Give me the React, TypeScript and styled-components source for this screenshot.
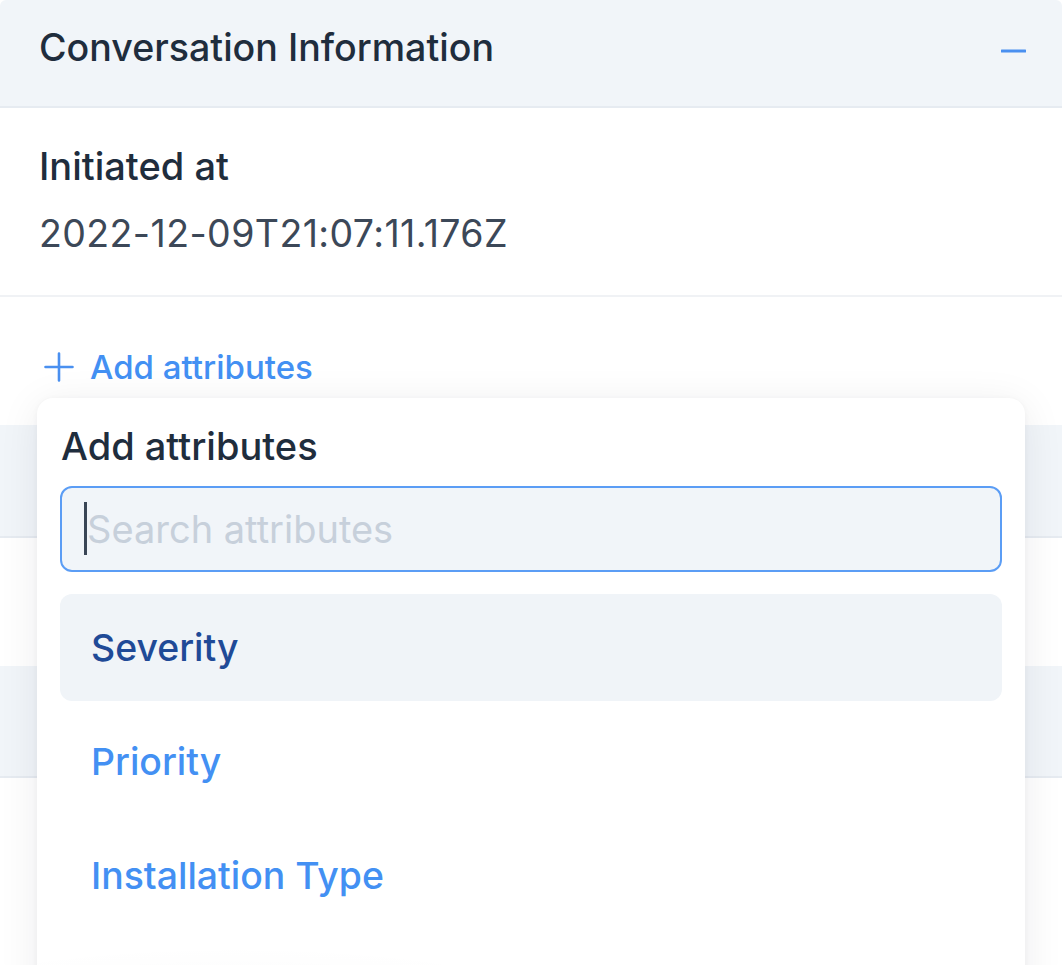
import React from "react";
import styled, { createGlobalStyle } from "styled-components";

const GlobalStyle = createGlobalStyle`
  html, body {
    margin: 0;
    padding: 0;
    background: #ffffff;
  }
  body {
    font-family: Inter, "Noto Sans", "Liberation Sans", sans-serif;
    -webkit-font-smoothing: antialiased;
  }
  * { box-sizing: border-box; }
`;

const Page = styled.div`
  position: relative;
  width: 1062px;
  height: 965px;
  overflow: hidden;
  background: #ffffff;
  border-radius: 6px;
`;

const SectionHeader = styled.div<{ $h: number }>`
  display: flex;
  align-items: flex-start;
  justify-content: space-between;
  height: ${(p) => p.$h}px;
  padding: 24px 36px 0 39px;
  background: #f1f5f9;
  border-bottom: 2px solid #e6ebf1;
`;

const SectionTitle = styled.h2`
  margin: 0;
  font-size: 37.6px;
  line-height: 48px;
  font-weight: 500;
  color: #1f2d3d;
`;

const CollapseButton = styled.button`
  display: flex;
  align-items: center;
  justify-content: center;
  width: 25px;
  height: 48px;
  margin-top: 3px;
  padding: 0;
  border: none;
  background: transparent;
  cursor: pointer;
`;

const InfoBlock = styled.div`
  display: flex;
  flex-direction: column;
  gap: 20px;
  padding: 34px 39px 37px;
  border-bottom: 2px solid #f0f2f5;
`;

const InfoLabel = styled.div`
  font-size: 38px;
  line-height: 48px;
  font-weight: 500;
  color: #1f2d3d;
`;

const InfoValue = styled.div`
  font-size: 37.5px;
  line-height: 48px;
  font-weight: 400;
  color: #3c4858;
  letter-spacing: 0.4px;
`;

const AddRow = styled.div`
  height: 128px;
  padding: 48px 0 0 44px;
`;

const AddButton = styled.button`
  display: inline-flex;
  align-items: center;
  gap: 16px;
  padding: 0;
  border: none;
  background: transparent;
  font-family: inherit;
  font-size: 33px;
  line-height: 44px;
  font-weight: 500;
  color: #4390f3;
  cursor: pointer;
`;

const Blank = styled.div<{ $h: number }>`
  height: ${(p) => p.$h}px;
  background: #ffffff;
`;

const Dropdown = styled.div`
  position: absolute;
  top: 398px;
  left: 37px;
  width: 988px;
  height: 640px;
  padding: 24px 23px 0;
  background: #ffffff;
  border-radius: 16px;
  box-shadow: 0 6px 40px rgba(15, 23, 42, 0.08), 0 1px 6px rgba(15, 23, 42, 0.04);
  display: flex;
  flex-direction: column;
`;

const DropdownTitle = styled.h3`
  margin: 0 0 16px 1px;
  font-size: 38px;
  line-height: 48px;
  font-weight: 500;
  color: #1f2d3d;
`;

const SearchWrap = styled.div`
  position: relative;
  height: 86px;
  margin-bottom: 22px;
`;

const SearchInput = styled.input`
  width: 100%;
  height: 100%;
  padding: 0 0 0 25px;
  border: 2px solid #5b9df5;
  border-radius: 12px;
  background: #f1f5f9;
  font-family: inherit;
  font-size: 38px;
  font-weight: 400;
  color: #1f2d3d;
  outline: none;
  &::placeholder {
    color: #c7d0db;
  }
`;

const Caret = styled.span`
  position: absolute;
  left: 24px;
  top: 16px;
  width: 3px;
  height: 53px;
  background: #3a4656;
`;

const OptionList = styled.ul`
  list-style: none;
  margin: 0;
  padding: 0;
  display: flex;
  flex-direction: column;
  gap: 7px;
`;

const Option = styled.li<{ $active?: boolean }>`
  display: flex;
  align-items: center;
  height: 107px;
  padding-left: 31px;
  border-radius: 12px;
  background: ${(p) => (p.$active ? "#f0f4f8" : "transparent")};
  font-size: 37.4px;
  font-weight: 500;
  color: ${(p) => (p.$active ? "#1f4a97" : "#4390f3")};
`;

const BottomFade = styled.div`
  position: absolute;
  left: 0;
  right: 0;
  top: 505px;
  height: 140px;
  pointer-events: none;
  background: radial-gradient(ellipse 60% 100% at 20% 100%, rgba(15, 23, 42, 0.035), rgba(15, 23, 42, 0) 70%);
`;

const MinusIcon = () => (
  <svg width="25" height="4" viewBox="0 0 25 4" aria-hidden="true">
    <rect x="0" y="0.5" width="25" height="3" rx="0.5" fill="#4a90f0" />
  </svg>
);

const PlusIcon = () => (
  <svg width="30" height="30" viewBox="0 0 30 30" aria-hidden="true">
    <path d="M15 1.5V28.5M1.5 15H28.5" stroke="#4a90f0" strokeWidth="2.6" strokeLinecap="round" />
  </svg>
);

export default function App() {
  return (
    <>
      <GlobalStyle />
      <Page>
        <SectionHeader $h={108}>
          <SectionTitle>Conversation Information</SectionTitle>
          <CollapseButton aria-label="Collapse">
            <MinusIcon />
          </CollapseButton>
        </SectionHeader>
        <InfoBlock>
          <InfoLabel>Initiated at</InfoLabel>
          <InfoValue>2022-12-09T21:07:11.176Z</InfoValue>
        </InfoBlock>
        <AddRow>
          <AddButton>
            <PlusIcon />
            Add attributes
          </AddButton>
        </AddRow>
        <SectionHeader $h={113} />
        <Blank $h={128} />
        <SectionHeader $h={112} />
        <Blank $h={200} />

        <Dropdown>
          <DropdownTitle>Add attributes</DropdownTitle>
          <SearchWrap>
            <SearchInput placeholder="Search attributes" />
            <Caret />
          </SearchWrap>
          <OptionList>
            <Option $active>Severity</Option>
            <Option>Priority</Option>
            <Option>Installation Type</Option>
          </OptionList>
          <BottomFade />
        </Dropdown>
      </Page>
    </>
  );
}
